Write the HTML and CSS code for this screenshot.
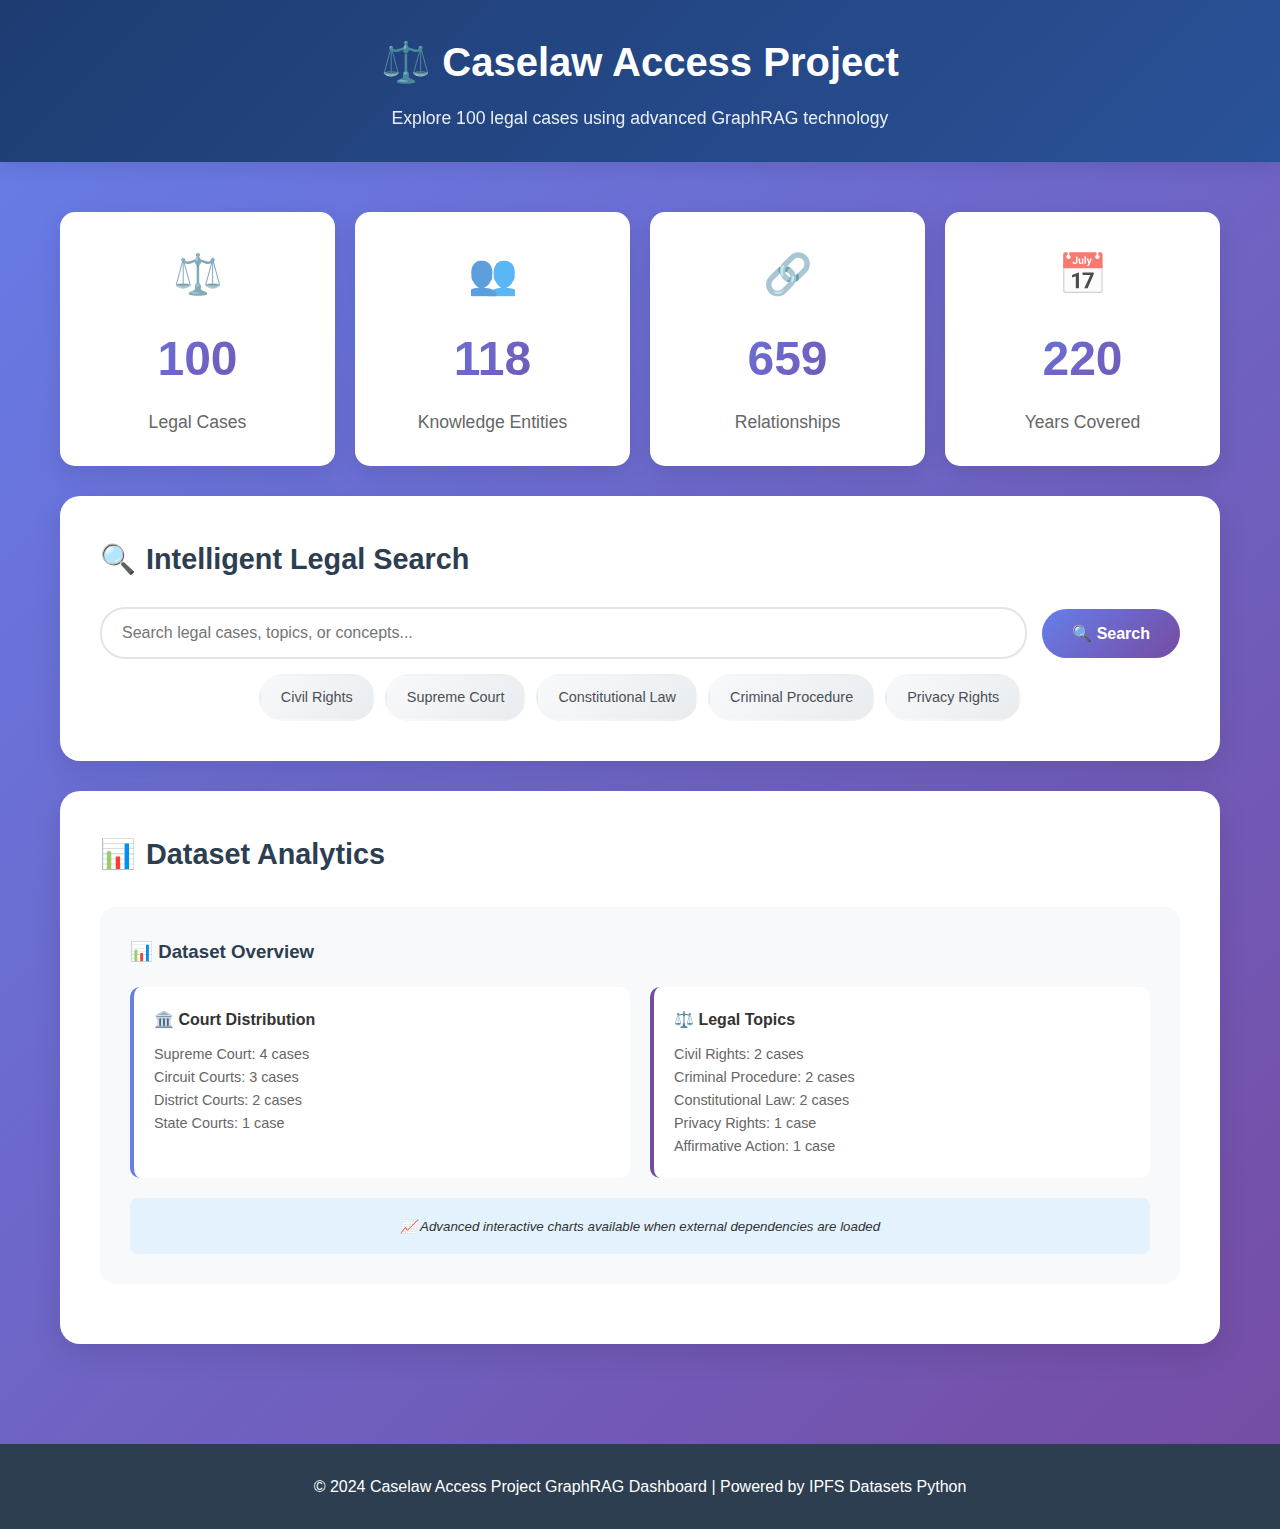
FILE: index.html
```html
<!DOCTYPE html>
<html lang="en">
<head>
<meta charset="UTF-8">
<title>Caselaw Access Project</title>
<link rel="stylesheet" href="styles.css">
</head>
<body>
<header class="header">
  <h1>⚖️ Caselaw Access Project</h1>
  <p>Explore 100 legal cases using advanced GraphRAG technology</p>
</header>
<main class="container">
  <section class="stats">
    <div class="stat"><div class="stat-icon">⚖️</div><div class="stat-number">100</div><div class="stat-label">Legal Cases</div></div>
    <div class="stat"><div class="stat-icon">👥</div><div class="stat-number">118</div><div class="stat-label">Knowledge Entities</div></div>
    <div class="stat"><div class="stat-icon">🔗</div><div class="stat-number">659</div><div class="stat-label">Relationships</div></div>
    <div class="stat"><div class="stat-icon">📅</div><div class="stat-number">220</div><div class="stat-label">Years Covered</div></div>
  </section>
  <section class="panel">
    <h2><span>🔍</span> Intelligent Legal Search</h2>
    <div class="search-row">
      <input class="search-input" type="text" placeholder="Search legal cases, topics, or concepts...">
      <button class="search-button">🔍 Search</button>
    </div>
    <div class="tags">
      <span class="tag">Civil Rights</span>
      <span class="tag">Supreme Court</span>
      <span class="tag">Constitutional Law</span>
      <span class="tag">Criminal Procedure</span>
      <span class="tag">Privacy Rights</span>
    </div>
  </section>
  <section class="panel analytics">
    <h2><span>📊</span> Dataset Analytics</h2>
    <div class="overview">
      <h3>📊 Dataset Overview</h3>
      <div class="overview-grid">
        <div class="card card-courts">
          <h4>🏛️ Court Distribution</h4>
          <p>Supreme Court: 4 cases<br>Circuit Courts: 3 cases<br>District Courts: 2 cases<br>State Courts: 1 case</p>
        </div>
        <div class="card card-topics">
          <h4>⚖️ Legal Topics</h4>
          <p>Civil Rights: 2 cases<br>Criminal Procedure: 2 cases<br>Constitutional Law: 2 cases<br>Privacy Rights: 1 case<br>Affirmative Action: 1 case</p>
        </div>
      </div>
      <div class="note"><small><em>📈 Advanced interactive charts available when external dependencies are loaded</em></small></div>
    </div>
  </section>
</main>
<footer class="footer">© 2024 Caselaw Access Project GraphRAG Dashboard | Powered by IPFS Datasets Python</footer>
</body>
</html>
```
FILE: styles.css
```css
* { margin: 0; padding: 0; box-sizing: border-box; }
body {
  font-family: "Liberation Sans", Arial, sans-serif;
  line-height: 1.6;
  color: #333;
  background: linear-gradient(135deg, #667eea 0%, #764ba2 100%);
  min-height: 100vh;
}
.header {
  padding: 30px 0;
  background: linear-gradient(135deg, #1e3c72 0%, #2a5298 100%);
  color: #fff;
  text-align: center;
  box-shadow: 0 4px 20px rgba(0, 0, 0, 0.1);
}
.header h1 { font-size: 2.5rem; margin-bottom: 10px; }
.header p { font-size: 1.1rem; opacity: 0.9; }
.container { max-width: 1200px; margin: 0 auto; padding: 50px 20px 100px; }
.stats { display: grid; grid-template-columns: repeat(4, 1fr); gap: 20px; margin-bottom: 30px; }
.stat {
  padding: 30px;
  border-radius: 15px;
  background: #fff;
  text-align: center;
  box-shadow: 0 8px 25px rgba(0, 0, 0, 0.1);
}
.stat-icon { font-size: 2.5rem; margin-bottom: 15px; opacity: 0.7; }
.stat-number {
  font-size: 3rem;
  font-weight: bold;
  margin-bottom: 10px;
  background: linear-gradient(135deg, #667eea, #764ba2);
  background-clip: text;
  -webkit-background-clip: text;
  color: transparent;
}
.stat-label { font-size: 1.1rem; color: #666; }
.panel {
  padding: 40px;
  margin-bottom: 30px;
  border-radius: 20px;
  background: #fff;
  box-shadow: 0 10px 30px rgba(0, 0, 0, 0.1);
}
.panel h2 { display: flex; align-items: center; gap: 10px; font-size: 1.8rem; margin-bottom: 25px; color: #2c3e50; }
.search-row { display: flex; align-items: center; gap: 15px; margin-bottom: 15px; }
.search-input {
  flex: 1;
  height: 52px;
  padding: 15px 20px;
  border: 2px solid #e1e5e9;
  border-radius: 25px;
  font: 16px "Liberation Sans", Arial, sans-serif;
}
.search-button {
  height: 49px;
  padding: 15px 30px;
  border: 0;
  border-radius: 25px;
  background: linear-gradient(135deg, #667eea, #764ba2);
  color: #fff;
  font: bold 16px "Liberation Sans", Arial, sans-serif;
}
.tags { display: flex; justify-content: center; gap: 10px; }
.tag {
  padding: 10px 20px;
  border: 2px solid transparent;
  border-radius: 25px;
  background: linear-gradient(135deg, #f8f9fa, #e9ecef);
  color: #495057;
  font-size: 0.9rem;
}
.analytics { padding-bottom: 60px; margin-bottom: 0; }
.analytics h2 { margin-bottom: 30px; }
.overview { padding: 30px; border-radius: 15px; background: #f8f9fa; }
.overview h3 { font-size: 1.17em; margin-bottom: 20px; color: #2c3e50; }
.overview-grid { display: grid; grid-template-columns: 1fr 1fr; gap: 20px; margin-bottom: 20px; }
.card { padding: 20px; border-radius: 10px; background: #fff; border-left: 4px solid #667eea; }
.card-topics { border-left-color: #764ba2; }
.card h4 { margin-bottom: 10px; }
.card p { font-size: 0.9rem; color: #666; }
.note { padding: 15px; border-radius: 8px; background: #e3f2fd; text-align: center; }
.footer { padding: 30px 20px; background: #2c3e50; color: #fff; text-align: center; }
```
